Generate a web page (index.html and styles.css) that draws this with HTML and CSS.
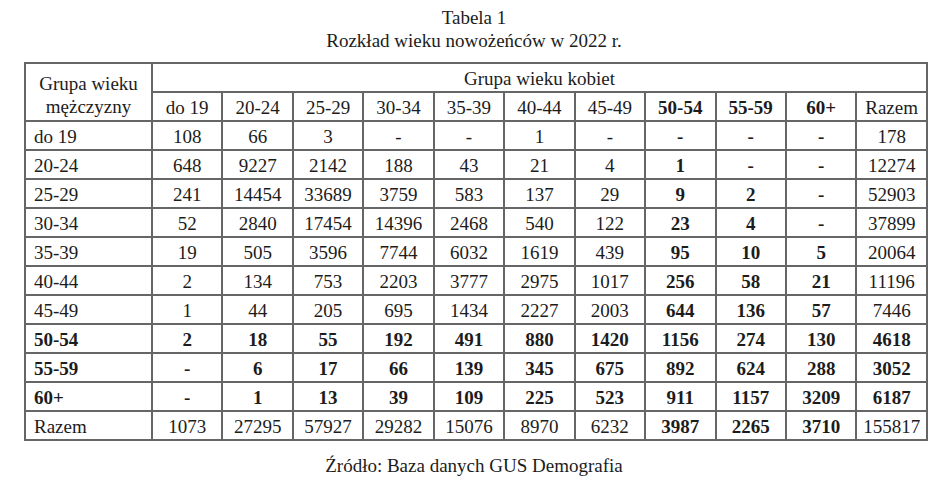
FILE: index.html
```html
<!DOCTYPE html>
<html lang="pl">
<head>
<meta charset="utf-8">
<title>Tabela 1</title>
<link rel="stylesheet" href="styles.css">
</head>
<body>
<div class="page">
  <div class="caption">
    <div>Tabela 1</div>
    <div>Rozkład wieku nowożeńców w 2022 r.</div>
  </div>
  <table class="grid">
    <colgroup>
      <col class="c-first">
      <col span="11" class="c-num">
    </colgroup>
    <thead>
      <tr>
        <th rowspan="2" class="corner">Grupa wieku<br>mężczyzny</th>
        <th colspan="11" class="group">Grupa wieku kobiet</th>
      </tr>
      <tr>
        <th>do 19</th><th>20-24</th><th>25-29</th><th>30-34</th><th>35-39</th><th>40-44</th><th>45-49</th><th class="b">50-54</th><th class="b">55-59</th><th class="b">60+</th><th>Razem</th>
      </tr>
    </thead>
    <tbody>
      <tr><td class="lbl">do 19</td><td>108</td><td>66</td><td>3</td><td>-</td><td>-</td><td>1</td><td>-</td><td class="b">-</td><td class="b">-</td><td class="b">-</td><td>178</td></tr>
      <tr><td class="lbl">20-24</td><td>648</td><td>9227</td><td>2142</td><td>188</td><td>43</td><td>21</td><td>4</td><td class="b">1</td><td class="b">-</td><td class="b">-</td><td>12274</td></tr>
      <tr><td class="lbl">25-29</td><td>241</td><td>14454</td><td>33689</td><td>3759</td><td>583</td><td>137</td><td>29</td><td class="b">9</td><td class="b">2</td><td class="b">-</td><td>52903</td></tr>
      <tr><td class="lbl">30-34</td><td>52</td><td>2840</td><td>17454</td><td>14396</td><td>2468</td><td>540</td><td>122</td><td class="b">23</td><td class="b">4</td><td class="b">-</td><td>37899</td></tr>
      <tr><td class="lbl">35-39</td><td>19</td><td>505</td><td>3596</td><td>7744</td><td>6032</td><td>1619</td><td>439</td><td class="b">95</td><td class="b">10</td><td class="b">5</td><td>20064</td></tr>
      <tr><td class="lbl">40-44</td><td>2</td><td>134</td><td>753</td><td>2203</td><td>3777</td><td>2975</td><td>1017</td><td class="b">256</td><td class="b">58</td><td class="b">21</td><td>11196</td></tr>
      <tr><td class="lbl">45-49</td><td>1</td><td>44</td><td>205</td><td>695</td><td>1434</td><td>2227</td><td>2003</td><td class="b">644</td><td class="b">136</td><td class="b">57</td><td>7446</td></tr>
      <tr class="bold-row"><td class="lbl">50-54</td><td>2</td><td>18</td><td>55</td><td>192</td><td>491</td><td>880</td><td>1420</td><td>1156</td><td>274</td><td>130</td><td>4618</td></tr>
      <tr class="bold-row"><td class="lbl">55-59</td><td>-</td><td>6</td><td>17</td><td>66</td><td>139</td><td>345</td><td>675</td><td>892</td><td>624</td><td>288</td><td>3052</td></tr>
      <tr class="bold-row"><td class="lbl">60+</td><td>-</td><td>1</td><td>13</td><td>39</td><td>109</td><td>225</td><td>523</td><td>911</td><td>1157</td><td>3209</td><td>6187</td></tr>
      <tr><td class="lbl">Razem</td><td>1073</td><td>27295</td><td>57927</td><td>29282</td><td>15076</td><td>8970</td><td>6232</td><td class="b">3987</td><td class="b">2265</td><td class="b">3710</td><td>155817</td></tr>
    </tbody>
  </table>
  <div class="source">Źródło: Baza danych GUS Demografia</div>
</div>
</body>
</html>
```

FILE: styles.css
```css
html, body {
  margin: 0;
  padding: 0;
  background: #ffffff;
}

.page {
  width: 948px;
  height: 478px;
  font-family: "Liberation Serif", "Times New Roman", serif;
  font-size: 19px;
  color: #1c1c1c;
  padding-top: 6px;
  box-sizing: border-box;
}

.caption {
  text-align: center;
  line-height: 23px;
  margin-bottom: 10px;
}

.grid {
  margin-left: 24px;
  width: 902px;
  border-collapse: collapse;
  table-layout: fixed;
}

.c-first { width: 127px; }
.c-num { width: 70.45px; }

.grid th,
.grid td {
  border: 2px solid #666666;
  height: 25px;
  padding: 2px 0 0 0;
  text-align: center;
  font-weight: normal;
  line-height: 25px;
  white-space: nowrap;
}

.grid th.corner {
  line-height: 23px;
  padding-top: 5px;
}

.grid td.lbl {
  text-align: left;
  padding-left: 8px;
}

.grid .b,
.grid .bold-row td {
  font-weight: bold;
}

.source {
  text-align: center;
  line-height: 23px;
  margin-top: 13px;
}
```
